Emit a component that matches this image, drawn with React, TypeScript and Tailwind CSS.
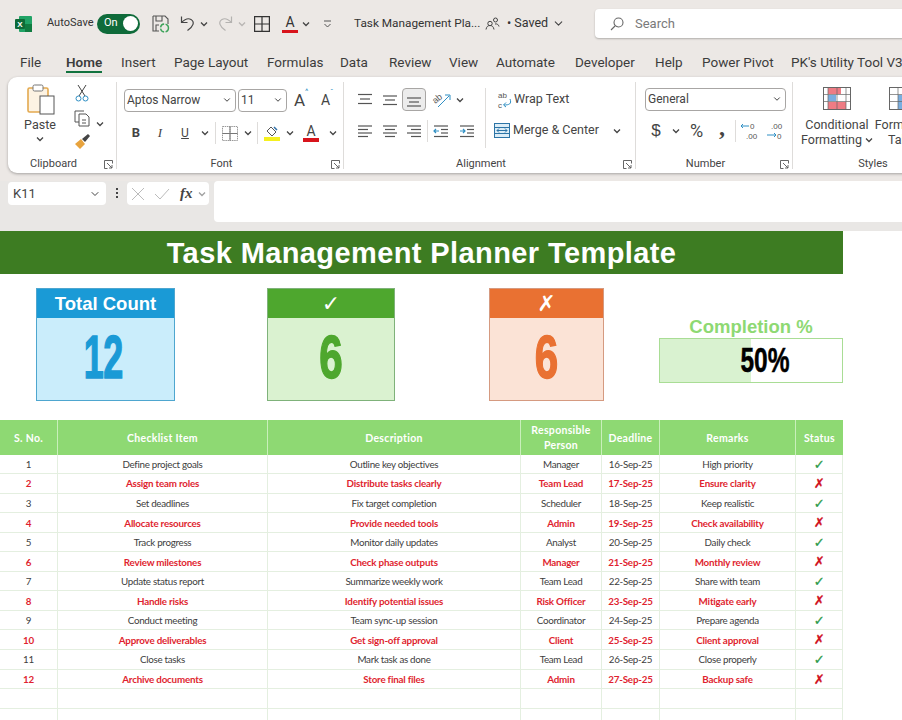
import { ChevronDown } from "lucide-react";
import type { ReactNode } from "react";

const UI = "font-['Roboto','Noto_Sans',sans-serif]";

type Row = { no: number; item: string; desc: string; person: string; date: string; remark: string; done: boolean };

const rows: Row[] = [
  { no: 1, item: "Define project goals", desc: "Outline key objectives", person: "Manager", date: "16-Sep-25", remark: "High priority", done: true },
  { no: 2, item: "Assign team roles", desc: "Distribute tasks clearly", person: "Team Lead", date: "17-Sep-25", remark: "Ensure clarity", done: false },
  { no: 3, item: "Set deadlines", desc: "Fix target completion", person: "Scheduler", date: "18-Sep-25", remark: "Keep realistic", done: true },
  { no: 4, item: "Allocate resources", desc: "Provide needed tools", person: "Admin", date: "19-Sep-25", remark: "Check availability", done: false },
  { no: 5, item: "Track progress", desc: "Monitor daily updates", person: "Analyst", date: "20-Sep-25", remark: "Daily check", done: true },
  { no: 6, item: "Review milestones", desc: "Check phase outputs", person: "Manager", date: "21-Sep-25", remark: "Monthly review", done: false },
  { no: 7, item: "Update status report", desc: "Summarize weekly work", person: "Team Lead", date: "22-Sep-25", remark: "Share with team", done: true },
  { no: 8, item: "Handle risks", desc: "Identify potential issues", person: "Risk Officer", date: "23-Sep-25", remark: "Mitigate early", done: false },
  { no: 9, item: "Conduct meeting", desc: "Team sync-up session", person: "Coordinator", date: "24-Sep-25", remark: "Prepare agenda", done: true },
  { no: 10, item: "Approve deliverables", desc: "Get sign-off approval", person: "Client", date: "25-Sep-25", remark: "Client approval", done: false },
  { no: 11, item: "Close tasks", desc: "Mark task as done", person: "Team Lead", date: "26-Sep-25", remark: "Close properly", done: true },
  { no: 12, item: "Archive documents", desc: "Store final files", person: "Admin", date: "27-Sep-25", remark: "Backup safe", done: false },
];

const COLS = "grid grid-cols-[58px_210px_253px_81px_58px_136px_47px]";

function Chev({ className = "" }: { className?: string }) {
  return (
    <svg width="8" height="6" viewBox="0 0 8 6" className={className} fill="none" stroke="#444" strokeWidth="1.3">
      <path d="M1 1.5l3 3 3-3" />
    </svg>
  );
}

// little stack of horizontal lines used by the alignment buttons
function Lines({ lines, arrow }: { lines: [number, number, number][]; arrow?: "in" | "out" }) {
  return (
    <svg width="16" height="14" viewBox="0 0 16 14" fill="none" stroke="#555" strokeWidth="1.2">
      {lines.map(([a, b, y]) => (
        <path key={`${a}${b}${y}`} d={`M${a} ${y}H${b}`} />
      ))}
      {arrow === "in" && <path d="M6 7H1M3 5L1 7l2 2" stroke="#2f8fc4" />}
      {arrow === "out" && <path d="M1 7h5M4 5l2 2-2 2" stroke="#2f8fc4" />}
    </svg>
  );
}

function Cell({ w, children, className = "" }: { w: string; children: ReactNode; className?: string }) {
  return <div className={`flex items-center justify-center shrink-0 ${w} ${className}`}>{children}</div>;
}

function Launcher() {
  return (
    <svg width="9" height="9" viewBox="0 0 9 9" fill="none" stroke="#555" strokeWidth="0.9">
      <path d="M8.5 3.5V.5H.5v8h3M3 3l5 5M8 5v3H5" />
    </svg>
  );
}

function Group({ label, w, children, launcher = true, last = false }: { label: string; w: string; children: ReactNode; launcher?: boolean; last?: boolean }) {
  return (
    <div className={`relative flex flex-col shrink-0 h-full ${w}`}>
      <div className="flex-1 min-h-0">{children}</div>
      <div className="flex items-center h-[18px]">
        <div className="flex-1 text-center text-[11px] text-[#444]">{label}</div>
        {launcher && (
          <div className="w-[18px] flex justify-center">
            <Launcher />
          </div>
        )}
      </div>
      {!last && <div className="absolute right-0 top-[5px] bottom-[4px] w-px bg-[#dedcda]" />}
    </div>
  );
}

function SelectBox({ text, w }: { text: string; w: string }) {
  return (
    <div className={`flex items-center justify-between h-[23px] pb-[1px] rounded-[4px] border border-[#a8a6a4] pl-[2px] pr-[3px] text-[12px] text-[#444] ${w}`}>
      <span>{text}</span>
      <ChevronDown size={10} strokeWidth={2.4} color="#444" />
    </div>
  );
}

function TitleBar() {
  return (
    <div className="flex items-center h-[47px] text-[#333]">
      <svg width="17" height="16" viewBox="0 0 17 16" className="ml-[15px]">
        <rect x="4" y="0" width="13" height="16" rx="1" fill="#21a366" />
        <rect x="10" y="8" width="7" height="8" fill="#107c41" />
        <rect x="0" y="3" width="10" height="10" rx="1" fill="#0e6b38" />
        <text x="5" y="11" textAnchor="middle" fontSize="8" fontWeight="700" fill="#fff" fontFamily="Liberation Sans">X</text>
      </svg>
      <span className="ml-[15px] text-[11px] w-[44px]">AutoSave</span>
      <div className="ml-[6px] flex items-center justify-between w-[43px] h-[20px] rounded-full bg-[#0f6b3a] pl-[7px] pr-[2px] text-white text-[11px]">
        <span>On</span>
        <span className="w-[15px] h-[15px] rounded-full bg-white" />
      </div>
      <svg width="18" height="18" viewBox="0 0 18 18" fill="none" className="ml-[12px]" stroke="#555" strokeWidth="1.1">
        <path d="M1 1h12l3 3v5M1 1v15h6M4 1v5h6V1M4 16v-6h3" />
        <circle cx="12.5" cy="13" r="4" stroke="#3da35a" strokeWidth="1.4" strokeDasharray="5 1.5" />
      </svg>
      <svg width="17" height="17" viewBox="0 0 17 17" fill="none" className="ml-[10px]" stroke="#444" strokeWidth="1.2">
        <path d="M1.5 1.5v6h6M1.5 7.5C5 4 8.5 3 11 4.500c4 2.500 2.500 7-3.500 11" />
      </svg>
      <Chev className="ml-[3px]" />
      <svg width="17" height="17" viewBox="0 0 17 17" fill="none" className="ml-[8px]" stroke="#b4b2b0" strokeWidth="1.2">
        <path d="M15.500 1.500v6h-6M15.500 7.500C12 4 8.500 3 6 4.500c-4 2.500-2.500 7 3.500 11" />
      </svg>
      <Chev className="ml-[5px] opacity-30" />
      <svg width="16" height="16" viewBox="0 0 16 16" fill="none" className="ml-[8px]" stroke="#333" strokeWidth="1.2">
        <path d="M.6.6h14.800v14.800H.6zM8 .6v14.800M.6 8h14.800" />
      </svg>
      <div className="ml-[12px] flex flex-col items-center w-[16px] leading-none">
        <span className="text-[14px] h-[14px] text-[#333] leading-[14px]">A</span>
        <span className="w-[16px] h-[3px] mt-[1px] bg-[#d8141c]" />
      </div>
      <Chev className="ml-[4px]" />
      <svg width="9" height="8" viewBox="0 0 9 8" fill="none" stroke="#555" className="ml-[13px]">
        <path d="M1 1h7M1.500 4l3 3 3-3" />
      </svg>
      <span className="ml-[22px] text-[11.8px] w-[122px] whitespace-nowrap">Task Management Pla...</span>
      <svg width="15" height="13" viewBox="0 0 15 13" fill="none" className="ml-[9px]" stroke="#444" strokeWidth="1">
        <circle cx="5" cy="6.500" r="2.200" />
        <path d="M1 12.500c.5-3 2-4 4-4s3.500 1 4 4" />
        <circle cx="10.500" cy="3" r="2" />
        <path d="M10 7c2-.5 3.500.5 4 2.500" />
      </svg>
      <span className="ml-[7px] text-[12.5px] whitespace-nowrap w-[45px]">• Saved</span>
      <ChevronDown size={13} color="#444" />
      <div className="ml-[30px] flex items-center flex-1 h-[29px] rounded-l-[4px] bg-white shadow-[0_1px_2px_rgba(0,0,0,0.25)] mr-[-10px]">
        <svg width="14" height="14" viewBox="0 0 14 14" fill="none" stroke="#666" strokeWidth="1.1" className="ml-[15px]">
          <circle cx="8.500" cy="5.500" r="4.500" />
          <path d="M5 9l-4 4" />
        </svg>
        <span className="ml-[11px] text-[13px] text-[#7a7a7a]">Search</span>
      </div>
    </div>
  );
}

function Tabs() {
  const tabs: [string, string][] = [
    ["File", "w-[46px]"], ["Home", "w-[55px]"], ["Insert", "w-[53px]"], ["Page Layout", "w-[93px]"],
    ["Formulas", "w-[73px]"], ["Data", "w-[49px]"], ["Review", "w-[60px]"], ["View", "w-[47px]"],
    ["Automate", "w-[79px]"], ["Developer", "w-[80px]"], ["Help", "w-[47px]"], ["Power Pivot", "w-[89px]"],
    ["PK's Utility Tool V3", "w-[111px]"],
  ];
  return (
    <div className="flex h-[30px] pl-[20px] text-[13.5px] text-[#3c3c3c] whitespace-nowrap">
      {tabs.map(([t, w]) => (
        <div key={t} className={`shrink-0 pt-[5px] ${w}`}>
          <span className={`relative inline-block h-[21px] ${t === "Home" ? "font-semibold" : ""}`}>
            {t}
            {t === "Home" && <span className="absolute left-0 right-0 bottom-0 h-[2px] bg-[#12733f]" />}
          </span>
        </div>
      ))}
    </div>
  );
}

function Ribbon() {
  return (
    <div className="flex ml-[8px] w-[920px] h-[96px] bg-white rounded-l-[9px] shadow-[0_1px_3px_rgba(0,0,0,0.3)]">
      <Group label="Clipboard" w="w-[109px]">
        <div className="flex pt-[7px]">
          <div className="flex flex-col items-center w-[64px]">
            <svg width="28" height="31" viewBox="0 0 28 31" fill="none" className="ml-[1px]">
              <rect x="1" y="4" width="20" height="24" rx="1.500" fill="#fdf3e3" stroke="#e3a94f" strokeWidth="1.600" />
              <rect x="6" y="1" width="10" height="6" rx="1.500" fill="#fff" stroke="#777" />
              <rect x="13" y="12" width="14" height="18" fill="#fff" stroke="#555" />
            </svg>
            <span className="text-[12.5px] text-[#444] leading-[16px] mt-[2px]">Paste</span>
            <Chev className="mt-[3px]" />
          </div>
          <div className="flex flex-col items-center w-[20px]">
            <svg width="14" height="18" viewBox="0 0 14 18" fill="none" stroke="#444">
              <path d="M3 1l7 11M11 1L4 12" />
              <circle cx="3.500" cy="14.500" r="2.500" stroke="#2f8fc4" />
              <circle cx="10.500" cy="14.500" r="2.500" stroke="#2f8fc4" />
            </svg>
            <svg width="17" height="17" viewBox="0 0 17 17" fill="none" stroke="#555" className="mt-[8px]">
              <path d="M10 1H1v11h4" />
              <path d="M5 4h7l3 3v9H5z" fill="#fff" />
              <path d="M8 10h4M8 13h4" />
            </svg>
            <svg width="17" height="17" viewBox="0 0 17 17" className="mt-[6px]">
              <path d="M1 11l6-5 4 5-5 5z" fill="#e8a33d" />
              <path d="M8 6l6-5 2 2-5 6z" fill="#444" />
            </svg>
          </div>
          <Chev className="ml-[4px] mt-[37px]" />
        </div>
      </Group>

      <Group label="Font" w="w-[227px]">
        <div className="flex items-center pt-[11px] pl-[7px]">
          <SelectBox text="Aptos Narrow" w="w-[112px]" />
          <div className="w-[2px]" />
          <SelectBox text="11" w="w-[49px]" />
          <Cell w="w-[25px]"><span className="text-[17px] text-[#444] relative">A<span className="absolute text-[8px] text-[#2f8fc4] top-[-2px] left-[11px]">^</span></span></Cell>
          <Cell w="w-[27px]"><span className="text-[14px] text-[#444] relative">A<span className="absolute text-[8px] text-[#2f8fc4] top-[-3px] left-[9px]">ˇ</span></span></Cell>
        </div>
        <div className="flex items-center h-[23px] mt-[8px] pl-[7px]">
          <Cell w="w-[24px]"><span className="text-[13px] font-bold text-[#444]">B</span></Cell>
          <Cell w="w-[24px]"><span className="text-[13px] italic text-[#444] font-['Liberation_Serif',serif]">I</span></Cell>
          <Cell w="w-[26px]"><span className="text-[12px] underline text-[#444]">U</span></Cell>
          <Cell w="w-[13px]"><Chev /></Cell>
          <div className="w-px h-[22px] ml-[4px] bg-[#dedcda]" />
          <Cell w="w-[27px]">
            <svg width="16" height="15" viewBox="0 0 16 15" fill="none" stroke="#999">
              <path d="M.5.500h15v14H.5zM8 .500v14M.5 7.500h15" strokeDasharray="1.500 .7" />
              <path d="M.5 7.500h15M8 .500v14" stroke="#777" />
            </svg>
          </Cell>
          <Cell w="w-[9px]"><Chev /></Cell>
          <div className="w-px h-[22px] ml-[5px] bg-[#dedcda]" />
          <Cell w="w-[27px]" className="flex-col">
            <svg width="14" height="11" viewBox="0 0 14 11" fill="none" stroke="#555">
              <path d="M6 1l5 5-4 4-5-5z" />
              <path d="M9 1l3 3" stroke="#2f6fa8" strokeWidth="1.500" />
            </svg>
            <span className="w-[16px] h-[4px] bg-[#f5f01f]" />
          </Cell>
          <Cell w="w-[9px]"><Chev /></Cell>
          <Cell w="w-[34px]" className="flex-col">
            <span className="text-[14px] leading-[13px] text-[#444]">A</span>
            <span className="w-[16px] h-[4px] bg-[#d8141c]" />
          </Cell>
          <Cell w="w-[9px]"><Chev /></Cell>
        </div>
      </Group>

      <Group label="Alignment" w="w-[292px]">
        <div className="flex pt-[11px] pl-[8px]">
          <Cell w="w-[25px]" className="h-[23px]"><Lines lines={[[1, 15, 1.5], [3, 13, 6], [1, 15, 10.500]]} /></Cell>
          <Cell w="w-[25px]" className="h-[23px]"><Lines lines={[[1, 15, 3], [3, 13, 7], [1, 15, 11.500]]} /></Cell>
          <Cell w="w-[24px]" className="h-[23px] rounded-[4px] bg-[#ececec] border border-[#a8a6a4]"><Lines lines={[[1, 15, 5], [3, 13, 9], [1, 15, 13]]} /></Cell>
          <Cell w="w-[26px]" className="h-[23px] ml-[3px]">
            <svg width="18" height="17" viewBox="0 0 18 17" fill="none" className="overflow-visible">
              <text x="0" y="11" fontSize="9" fill="#555" transform="rotate(-40 4 9)" fontFamily="Liberation Sans">ab</text>
              <path d="M5 16L16 5M12 4h5v5" stroke="#2f8fc4" />
            </svg>
          </Cell>
          <Cell w="w-[10px]" className="h-[23px]"><Chev /></Cell>
          <div className="w-px h-[60px] ml-[20px] bg-[#dedcda]" />
          <div className="flex items-center h-[23px] ml-[11px]">
            <svg width="15" height="18" viewBox="0 0 15 18" fill="none">
              <text x="1" y="7" fontSize="8" fill="#555" fontFamily="Liberation Sans">ab</text>
              <text x="1" y="17" fontSize="8" fill="#555" fontFamily="Liberation Sans">c</text>
              <path d="M13 8c2 5-1 6-6 6M9 11.500L6.500 14 9 16" stroke="#2f8fc4" />
            </svg>
            <span className="ml-[2px] text-[12.5px] text-[#444]">Wrap Text</span>
          </div>
        </div>
        <div className="flex items-center h-[23px] mt-[-29px] pl-[8px]">
          <Cell w="w-[25px]"><Lines lines={[[1, 15, 2], [1, 11, 5.500], [1, 15, 9], [1, 11, 12.500]]} /></Cell>
          <Cell w="w-[25px]"><Lines lines={[[1, 15, 2], [3, 13, 5.500], [1, 15, 9], [3, 13, 12.500]]} /></Cell>
          <Cell w="w-[24px]"><Lines lines={[[1, 15, 2], [5, 15, 5.500], [1, 15, 9], [5, 15, 12.500]]} /></Cell>
          <div className="w-px h-[22px] ml-[1px] bg-[#dedcda]" />
          <Cell w="w-[26px]"><Lines lines={[[1, 15, 2], [8, 15, 5.500], [8, 15, 9], [1, 15, 12.500]]} arrow="in" /></Cell>
          <Cell w="w-[25px]"><Lines lines={[[1, 15, 2], [8, 15, 5.500], [8, 15, 9], [1, 15, 12.500]]} arrow="out" /></Cell>
          <div className="w-[15px]" />
          <svg width="16" height="15" viewBox="0 0 16 15" fill="none">
            <rect x=".5" y=".5" width="15" height="14" fill="#dcedf7" stroke="#2c74a6" />
            <path d="M.5 4.500h15M.5 10.500h15" stroke="#2c74a6" />
            <path d="M3 7.500h10M5 5.500l-2 2 2 2M11 5.500l2 2-2 2" stroke="#2c74a6" />
          </svg>
          <span className="ml-[3px] text-[12.5px] text-[#444] whitespace-nowrap w-[100px]">Merge &amp; Center</span>
          <Chev />
        </div>
      </Group>

      <Group label="Number" w="w-[157px]">
        <div className="pt-[11px] pl-[9px]">
          <SelectBox text="General" w="w-[141px]" />
        </div>
        <div className="flex items-center h-[23px] mt-[8px] pl-[9px]">
          <Cell w="w-[22px]"><span className="text-[17px] text-[#444] font-['Liberation_Sans',sans-serif]">$</span></Cell>
          <Cell w="w-[17px]"><Chev /></Cell>
          <Cell w="w-[25px]"><span className="text-[18px] text-[#444]">%</span></Cell>
          <Cell w="w-[26px]"><span className="text-[24px] font-bold text-[#444] font-['Liberation_Serif',serif] leading-[16px] mt-[-8px]">,</span></Cell>
          <div className="w-px h-[22px] bg-[#dedcda]" />
          <Cell w="w-[26px]">
            <svg width="18" height="18" viewBox="0 0 18 18" fill="none">
              <text x="10" y="7" fontSize="8" fill="#555" fontFamily="Liberation Sans">0</text>
              <text x="6" y="17" fontSize="8" fill="#555" fontFamily="Liberation Sans">.00</text>
              <path d="M9 4H1M3 2L1 4l2 2" stroke="#2f8fc4" />
            </svg>
          </Cell>
          <Cell w="w-[24px]">
            <svg width="18" height="18" viewBox="0 0 18 18" fill="none">
              <text x="6" y="7" fontSize="8" fill="#555" fontFamily="Liberation Sans">.00</text>
              <text x="12" y="17" fontSize="8" fill="#555" fontFamily="Liberation Sans">0</text>
              <path d="M2 13h9M9 11l2 2-2 2" stroke="#2f8fc4" />
            </svg>
          </Cell>
        </div>
      </Group>

      <Group label="Styles" w="w-[160px]" launcher={false} last>
        <div className="flex pt-[10px] text-[12.5px] leading-[15px] text-[#444] text-center whitespace-nowrap">
          <div className="flex flex-col items-center w-[88px]">
            <svg width="28" height="23" viewBox="0 0 28 23" fill="none">
              <rect x=".5" y=".5" width="27" height="22" fill="#fff" stroke="#666" />
              <rect x="5" y="1" width="13" height="6" fill="#ee7c84" />
              <rect x="5" y="8" width="8" height="6" fill="#7aaee0" />
              <rect x="5" y="15" width="18" height="7" fill="#ee7c84" />
              <path d="M5 .5v22M14 .5v22M23 .5v22M.5 7.500h27M.5 14.500h27" stroke="#666" strokeWidth=".7" />
            </svg>
            <span className="mt-[7px]">Conditional</span>
            <span className="flex items-center gap-[3px]">Formatting <Chev /></span>
          </div>
          <div className="flex flex-col items-center w-[30px] ml-[7px]">
            <svg width="28" height="23" viewBox="0 0 28 23" fill="none" className="shrink-0">
              <rect x=".5" y=".5" width="27" height="22" fill="#fff" stroke="#666" />
              <rect x="9" y="8" width="18" height="14" fill="#7aaee0" />
              <path d="M9 .5v22M18 .5v22M.5 7.500h27M.5 14.500h27" stroke="#666" strokeWidth=".7" />
            </svg>
            <span className="mt-[7px]">Format as</span>
            <span>Table</span>
          </div>
        </div>
      </Group>
    </div>
  );
}

function FormulaBar() {
  return (
    <div className="flex items-start h-[50px] pl-[8px] bg-[#e9e7e5]">
      <div className="flex items-center justify-between w-[98px] h-[23px] mt-[1px] rounded-[4px] bg-white pl-[5px] pr-[5px] text-[13px] text-[#444]">
        K11
        <ChevronDown size={12} color="#444" />
      </div>
      <div className="w-[21px] flex flex-col items-center gap-[2px] pt-[7px]">
        <span className="w-[2px] h-[2px] bg-[#444]" />
        <span className="w-[2px] h-[2px] bg-[#444]" />
        <span className="w-[2px] h-[2px] bg-[#444]" />
      </div>
      <div className="flex items-center w-[82px] h-[23px] mt-[1px] rounded-[4px] bg-white pl-[5px]">
        <svg width="12" height="12" viewBox="0 0 12 12" fill="none" stroke="#bbb"><path d="M0 0l12 12M12 0L0 12" /></svg>
        <svg width="16" height="12" viewBox="0 0 16 12" fill="none" stroke="#bbb" className="ml-[10px]"><path d="M1 6l5 5L15 1" /></svg>
        <span className="ml-[10px] w-[14px] text-[15px] font-bold italic text-[#444] font-['Liberation_Serif',serif]">fx</span>
        <Chev className="ml-[4px] opacity-50" />
      </div>
      <div className="ml-[5px] flex-1 h-[41px] rounded-l-[4px] bg-white" />
    </div>
  );
}

function KpiCard({ title, value, w, head, body, border, color, className, glyph, tight }: { title: string; value: string; w: string; head: string; body: string; border: string; color: string; className: string; glyph?: boolean; tight?: boolean }) {
  return (
    <div className={`flex flex-col h-[113px] border shrink-0 ${w} ${body} ${border} ${className}`}>
      <div className={`flex items-center justify-center h-[29px] text-white font-bold ${head} ${glyph ? "text-[22px] font-['DejaVu_Sans',sans-serif]" : "text-[18.5px] font-['Liberation_Sans',sans-serif]"}`}>
        {title}
      </div>
      <div className={`flex flex-1 items-center justify-center pb-[4px] text-[62px] leading-none font-bold font-['Liberation_Sans',sans-serif] [-webkit-text-stroke:1.5px_currentColor] ${tight ? "scale-x-[0.58] tracking-[-1px] pr-[8px]" : "scale-x-[0.68]"} ${color}`}>
        {value}
      </div>
    </div>
  );
}

function Kpis() {
  return (
    <div className="flex w-[843px] h-[146px] pt-[14px]">
      <KpiCard title="Total Count" value="12" w="w-[139px]" head="bg-[#1a9ad6]" body="bg-[#caedfb]" border="border-[#4ea6cf]" color="text-[#1a9ad6]" className="ml-[36px]" tight />
      <KpiCard title="✓" value="6" w="w-[128px]" head="bg-[#4ea72e]" body="bg-[#daf2d0]" border="border-[#7fb27a]" color="text-[#4ea72e]" className="ml-[92px]" glyph />
      <KpiCard title="✗" value="6" w="w-[115px]" head="bg-[#e97132]" body="bg-[#fbe3d6]" border="border-[#d59a80]" color="text-[#e97132]" className="ml-[94px]" glyph />
      <div className="ml-[55px] w-[184px] pt-[26px]">
        <div className="h-[24px] text-center text-[18.5px] leading-[26px] font-bold text-[#8ed973] font-['Liberation_Sans',sans-serif]">Completion %</div>
        <div className="relative h-[45px] border border-[#a9dd95] bg-white">
          <div className="absolute inset-y-0 left-0 bg-[#d9f2d0]" style={{ width: "50%" }} />
          <div className="relative flex h-full items-center justify-center pl-[40px] text-[35px] font-bold text-black font-['Liberation_Sans',sans-serif] scale-x-[0.7] [-webkit-text-stroke:0.5px_#000]">50%</div>
        </div>
      </div>
    </div>
  );
}

function Table() {
  const heads = ["S. No.", "Checklist Item", "Description", "Responsible Person", "Deadline", "Remarks", "Status"];
  return (
    <div className="w-[843px] font-['Lato','Noto_Sans',sans-serif] text-[9.8px]">
      <div className={`${COLS} h-[34.5px] bg-[#8ed973] text-white font-bold text-[10.5px] leading-[15px] tracking-[0.3px]`}>
        {heads.map((h) => (
          <div key={h} className="flex items-center justify-center text-center pt-[2px] border-r border-[#c9efbb] last:border-r-0 px-[8px]">{h}</div>
        ))}
      </div>
      {rows.map((r) => {
        const tone = r.done ? "text-[#404040] tracking-[-0.3px]" : "text-[#e01f30] font-bold tracking-[-0.2px]";
        return (
          <div key={r.no} className={`${COLS} h-[19.55px] border-b border-[#e4efe0] ${tone}`}>
            {[r.no, r.item, r.desc, r.person, r.date, r.remark].map((v, i) => (
              <div key={i} className="flex items-center justify-center whitespace-nowrap border-r border-[#e4efe0]">{v}</div>
            ))}
            <div className={`flex items-center justify-center border-r border-[#e4efe0] text-[13px] font-bold font-['DejaVu_Sans',sans-serif] [-webkit-text-stroke:0.3px_currentColor] ${r.done ? "text-[#2a9a48]" : "text-[#d0101c]"}`}>
              {r.done ? "✓" : "✗"}
            </div>
          </div>
        );
      })}
      {[0, 1, 2].map((k) => (
        <div key={k} className={`${COLS} h-[19.55px] border-b border-[#e4efe0]`}>
          {heads.map((h) => (
            <div key={h} className="border-r border-[#e4efe0]" />
          ))}
        </div>
      ))}
    </div>
  );
}

export default function App() {
  return (
    <div className={`w-[902px] h-[720px] overflow-hidden bg-[#ece8e5] ${UI}`}>
      <TitleBar />
      <Tabs />
      <Ribbon />
      <div className="h-[8px]" />
      <FormulaBar />
      <div className="bg-white h-[489px]">
        <div className="flex items-center justify-center w-[843px] h-[43px] pt-[2px] bg-[#3d7c22] text-white text-[29px] font-bold tracking-[0.4px] font-['Liberation_Sans',sans-serif]">
          Task Management Planner Template
        </div>
        <Kpis />
        <Table />
      </div>
    </div>
  );
}
